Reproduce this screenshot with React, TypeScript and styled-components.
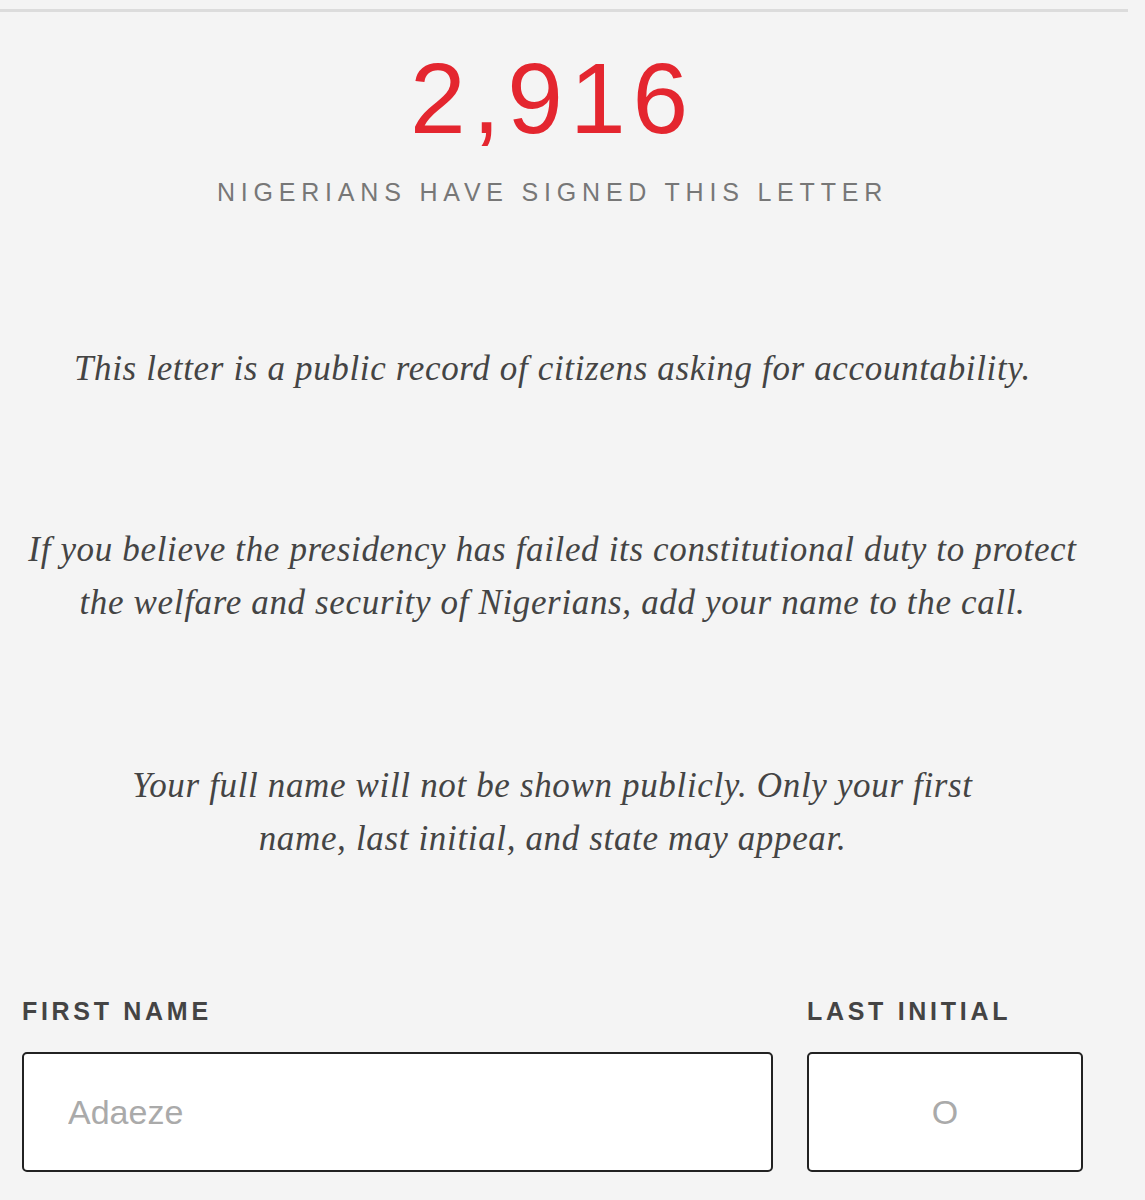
import React from "react";
import styled, { createGlobalStyle } from "styled-components";

const GlobalStyle = createGlobalStyle`
  html, body {
    margin: 0;
    padding: 0;
    background-color: #f4f4f4;
  }
`;

const Page = styled.div`
  width: 1145px;
  min-height: 1200px;
  background-color: #f4f4f4;
  padding-top: 9px;
  box-sizing: border-box;
`;

const TopRule = styled.div`
  width: 1128px;
  height: 3px;
  background-color: #dcdcdc;
`;

const Content = styled.div`
  width: 1061px;
  margin-left: 22px;
  display: flex;
  flex-direction: column;
  align-items: center;
`;

const Count = styled.div`
  margin-top: 26px;
  font-family: "Liberation Sans", Arial, sans-serif;
  font-size: 100px;
  line-height: 120px;
  letter-spacing: 7px;
  color: #e4262f;
`;

const CountCaption = styled.div`
  margin-top: 20px;
  font-family: "Liberation Sans", Arial, sans-serif;
  font-size: 25px;
  letter-spacing: 5.8px;
  color: #777;
`;

const Note = styled.p<{ $top: number }>`
  margin: 0;
  margin-top: ${(p) => p.$top}px;
  font-family: "Liberation Serif", "Times New Roman", serif;
  font-style: italic;
  font-size: 35px;
  line-height: 53px;
  letter-spacing: 0.65px;
  color: #444;
  text-align: center;
  white-space: nowrap;
`;

const Fields = styled.div`
  margin-top: 131px;
  width: 100%;
  display: grid;
  grid-template-columns: 1fr 276px;
  column-gap: 34px;
`;

const Field = styled.label`
  display: flex;
  flex-direction: column;
`;

const FieldLabel = styled.span`
  font-family: "Liberation Sans", Arial, sans-serif;
  font-weight: 700;
  font-size: 25px;
  letter-spacing: 3.7px;
  color: #444;
  line-height: 30px;
`;

const Input = styled.input<{ $center?: boolean }>`
  margin-top: 26px;
  height: 120px;
  box-sizing: border-box;
  border: 2.5px solid #222;
  border-radius: 5px;
  background-color: #fff;
  padding: 0 44px;
  font-family: "Liberation Sans", Arial, sans-serif;
  font-size: 34px;
  color: #222;
  text-align: ${(p) => (p.$center ? "center" : "left")};
  outline: none;

  &::placeholder {
    color: #aaa;
  }
`;

export default function App() {
  return (
    <Page>
      <GlobalStyle />
      <TopRule />
      <Content>
        <Count>2,916</Count>
        <CountCaption>NIGERIANS HAVE SIGNED THIS LETTER</CountCaption>
        <Note $top={135}>
          This letter is a public record of citizens asking for accountability.
        </Note>
        <Note $top={128}>
          If you believe the presidency has failed its constitutional duty to protect
          <br />
          the welfare and security of Nigerians, add your name to the call.
        </Note>
        <Note $top={130}>
          Your full name will not be shown publicly. Only your first
          <br />
          name, last initial, and state may appear.
        </Note>
        <Fields>
          <Field>
            <FieldLabel>FIRST NAME</FieldLabel>
            <Input placeholder="Adaeze" />
          </Field>
          <Field>
            <FieldLabel>LAST INITIAL</FieldLabel>
            <Input placeholder="O" $center maxLength={1} />
          </Field>
        </Fields>
      </Content>
    </Page>
  );
}
